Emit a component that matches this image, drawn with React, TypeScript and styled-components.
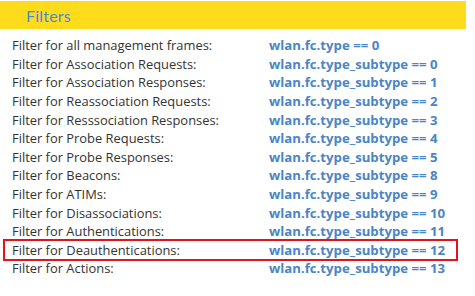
import React from 'react';
import styled, { createGlobalStyle } from 'styled-components';

const GlobalStyle = createGlobalStyle`
  html, body {
    margin: 0;
    padding: 0;
    background: #ffffff;
  }
  body {
    font-family: "Open Sans", Lato, "Liberation Sans", sans-serif;
  }
`;

interface FilterRow {
  label: string;
  expr: string;
  highlight?: boolean;
}

const rows: FilterRow[] = [
  { label: 'Filter for all management frames:', expr: 'wlan.fc.type == 0' },
  { label: 'Filter for Association Requests:', expr: 'wlan.fc.type_subtype == 0' },
  { label: 'Filter for Association Responses:', expr: 'wlan.fc.type_subtype == 1' },
  { label: 'Filter for Reassociation Requests:', expr: 'wlan.fc.type_subtype == 2' },
  { label: 'Filter for Resssociation Responses:', expr: 'wlan.fc.type_subtype == 3' },
  { label: 'Filter for Probe Requests:', expr: 'wlan.fc.type_subtype == 4' },
  { label: 'Filter for Probe Responses:', expr: 'wlan.fc.type_subtype == 5' },
  { label: 'Filter for Beacons:', expr: 'wlan.fc.type_subtype == 8' },
  { label: 'Filter for ATIMs:', expr: 'wlan.fc.type_subtype == 9' },
  { label: 'Filter for Disassociations:', expr: 'wlan.fc.type_subtype == 10' },
  { label: 'Filter for Authentications:', expr: 'wlan.fc.type_subtype == 11' },
  { label: 'Filter for Deauthentications:', expr: 'wlan.fc.type_subtype == 12', highlight: true },
  { label: 'Filter for Actions:', expr: 'wlan.fc.type_subtype == 13' },
];

const App = () => {
  return (
    <>
      <GlobalStyle />
      <Page>
        <Header>
          <Title>Filters</Title>
        </Header>
        <List>
          {rows.map((r) => (
            <Row key={r.expr} $highlight={r.highlight}>
              <Label>{r.label}</Label>
              <Expr>{r.expr}</Expr>
            </Row>
          ))}
        </List>
      </Page>
    </>
  );
};

const Page = styled.div`
  width: 475px;
  height: 296px;
  padding-top: 1px;
  box-sizing: border-box;
  background: #fff;
`;

const Header = styled.div`
  width: 466px;
  height: 28px;
  background: #fedc1b;
  display: flex;
  align-items: center;
  padding-left: 26px;
  box-sizing: border-box;
`;

const Title = styled.span`
  font-family: Lato, "Open Sans", sans-serif;
  font-size: 16px;
  color: #4a8bd4;
  letter-spacing: 0.2px;
`;

const List = styled.div`
  display: flex;
  flex-direction: column;
  padding-top: 7px;
`;

// the boxed row keeps its text on the same columns as the others
const Row = styled.div<{ $highlight?: boolean }>`
  display: grid;
  grid-template-columns: 257px 1fr;
  height: 18.6px;
  align-items: center;
  margin-left: ${({ $highlight }) => ($highlight ? '5px' : '12px')};
  padding-left: ${({ $highlight }) => ($highlight ? '7px' : '0')};
  width: ${({ $highlight }) => ($highlight ? '451px' : 'auto')};
  box-sizing: border-box;
  outline: ${({ $highlight }) => ($highlight ? '2px solid #e3121b' : 'none')};
  outline-offset: -0.5px;
`;

const Label = styled.span`
  font-size: 12.9px;
  color: #333333;
  white-space: nowrap;
`;

const Expr = styled.span`
  font-size: 13.2px;
  font-weight: 700;
  color: #4a85c6;
  white-space: nowrap;
`;

export default App;
